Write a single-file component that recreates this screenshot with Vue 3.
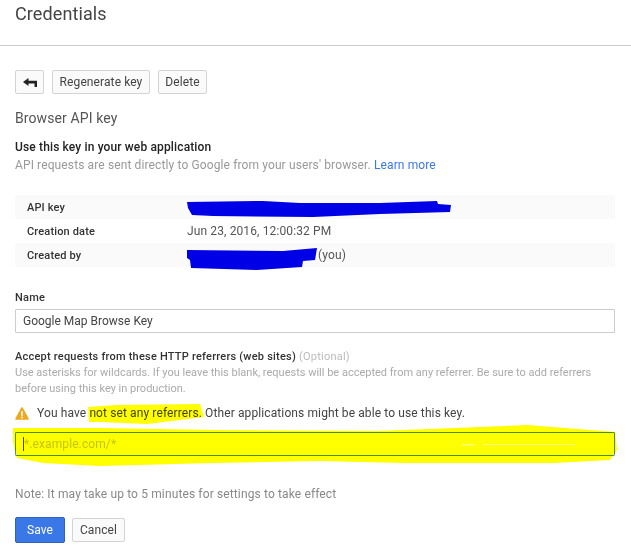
<script setup>
const rows = [
  { label: 'API key', value: '' },
  { label: 'Creation date', value: 'Jun 23, 2016, 12:00:32 PM' },
  { label: 'Created by', value: '(you)' }
]
</script>

<template>
  <div class="page">
    <header class="head"><h1>Credentials</h1></header>
    <main class="body">
      <div class="toolbar">
        <button class="btn back" aria-label="Back">
          <svg width="14" height="9" viewBox="0 0 14 9"><path d="M5.5 0 L0 4 L5.5 8 V5.4 H11.5 V9 H14 V2.8 H5.5 Z" fill="#222"/></svg>
        </button>
        <button class="btn regen">Regenerate key</button>
        <button class="btn del">Delete</button>
      </div>
      <h2>Browser API key</h2>
      <h3>Use this key in your web application</h3>
      <p class="help">API requests are sent directly to Google from your users' browser. <a>Learn more</a></p>
      <div class="table">
        <div v-for="r in rows" :key="r.label" class="row">
          <span class="k">{{ r.label }}</span>
          <span class="v" :class="{ you: r.value === '(you)' }">{{ r.value }}</span>
        </div>
      </div>
      <label class="lab name">Name</label>
      <div class="input">Google Map Browse Key</div>
      <label class="lab accept">Accept requests from these HTTP referrers (web sites) <i>(Optional)</i></label>
      <p class="small">Use asterisks for wildcards. If you leave this blank, requests will be accepted from any referrer. Be sure to add referrers before using this key in production.</p>
      <div class="warn">
        <svg width="14" height="13" viewBox="0 0 14 13"><path d="M7 1 L13 12 H1 Z" fill="#f0a81e" stroke="#f0a81e" stroke-width="1.6" stroke-linejoin="round"/><rect x="6.2" y="4.2" width="1.6" height="4.6" fill="#fff"/><rect x="6.2" y="9.6" width="1.6" height="1.6" fill="#fff"/></svg>
        <span>You have not set any referrers. Other applications might be able to use this key.</span>
      </div>
      <div class="input focus"><span class="caret"></span>*.example.com/*</div>
      <p class="note">Note: It may take up to 5 minutes for settings to take effect</p>
      <div class="actions">
        <button class="btn save">Save</button>
        <button class="btn cancel">Cancel</button>
      </div>
    </main>
    <svg class="ink marker" width="631" height="558" viewBox="0 0 631 558">
      <path d="M88 407 L117 405 L200 404 L204 417 L147 424 L100 422 L89 422 Z" fill="#ffff00"/>
      <path fill-rule="evenodd" fill="#ffff00" d="M13 428 L100 428 L217 430 L377 431 L480 427 L527 425 L603 431 L615 432 L617 450 L610 460 L553 463 L470 463 L403 463 L320 461 L213 463 L100 466 L43 463 L17 458 L13 442 Z M462 444.6 H475 V445.2 H462 Z M483 444.2 H540 V444.8 H483 Z M540 444.4 H575 V445 H540 Z"/>
    </svg>
    <svg class="ink" width="631" height="558" viewBox="0 0 631 558">
      <path d="M187 202 L263 201 L300 203 L380 203 L437 201 L438 204 L451 205 L450 212 L380 214 L313 217 L213 216 L192 215 L188 208 Z" fill="#0000e6"/>
      <path d="M187 250 L283 251 L317 248 L315 260 L303 261 L302 267 L257 270 L191 268 L190 260 L187 258 Z" fill="#0000e6"/>
    </svg>
  </div>
</template>

<style>
html, body { margin: 0; background: #fff; }
</style>

<style scoped>
.page { position: relative; width: 631px; height: 558px; overflow: hidden; font-family: Roboto, "Liberation Sans", sans-serif; font-size: 12px; color: #333; background: #fff; }
.head { height: 45px; border-bottom: 1px solid #ccc; }
h1 { margin: 0; padding: 2px 0 0 15px; font-size: 18px; line-height: 24px; font-weight: 400; letter-spacing: .1px; color: #444; }
.body { padding: 24px 16px 0 15px; }
.toolbar { display: flex; gap: 8px; }
.btn { box-sizing: border-box; height: 24px; padding: 0; border: 1px solid #d4d4d4; border-radius: 2px; background: #fafafa; font: 12px Roboto, sans-serif; letter-spacing: .1px; color: #444; }
.back { width: 29px; display: flex; align-items: center; justify-content: center; }
.regen { width: 98px; }
.del { width: 49px; }
h2 { margin: 15px 0 0; font-size: 14px; line-height: 18px; font-weight: 400; letter-spacing: .1px; color: #555; }
h3 { margin: 13px 0 0; font-size: 12px; line-height: 14px; font-weight: 500; letter-spacing: .14px; color: #222; }
.help { margin: 4px 0 0; line-height: 14px; font-size: 12px; letter-spacing: .12px; color: #999; }
a { color: #3b78e7; }
.table { margin: 23px 0 0; }
.row { display: flex; height: 24px; align-items: center; padding-left: 12px; }
.row:nth-child(odd) { background: #fafafa; }
.k { width: 160px; font-size: 11px; letter-spacing: .15px; color: #333; font-weight: 500; }
.v { font-size: 12px; letter-spacing: .12px; color: #555; }
.you { margin-left: 131px; }
.lab { display: block; font-size: 11px; line-height: 14px; font-weight: 500; letter-spacing: .22px; color: #333; }
.name { margin-top: 24px; }
.input { box-sizing: border-box; height: 24px; margin-top: 4px; padding: 0 7px; border: 1px solid #ccc; border-radius: 1px; line-height: 22px; font-size: 12px; color: #444; }
.accept { margin-top: 17px; }
.accept i { font-style: normal; font-weight: 400; color: #bbb; }
.small { margin: 1px 0 0; font-size: 11px; line-height: 16px; color: #aaa; }
.warn { display: flex; align-items: center; gap: 8px; margin-top: 8px; height: 16px; font-size: 12px; letter-spacing: .11px; color: #444; }
.focus { margin-top: 11px; border-color: #4d90fe; color: #c4c4c4; letter-spacing: .1px; }
.caret { display: inline-block; width: 1px; height: 14px; background: #444; vertical-align: -3px; }
.note { margin: 31px 0 0; font-size: 12px; line-height: 14px; letter-spacing: .13px; color: #888; }
.actions { display: flex; align-items: center; gap: 7px; margin-top: 16px; }
.save { height: 26px; width: 50px; background: #3b78e7; border-color: #2d62c4; color: #fff; }
.cancel { width: 53px; }
.ink { position: absolute; left: 0; top: 0; pointer-events: none; }
.marker { mix-blend-mode: multiply; }
</style>
